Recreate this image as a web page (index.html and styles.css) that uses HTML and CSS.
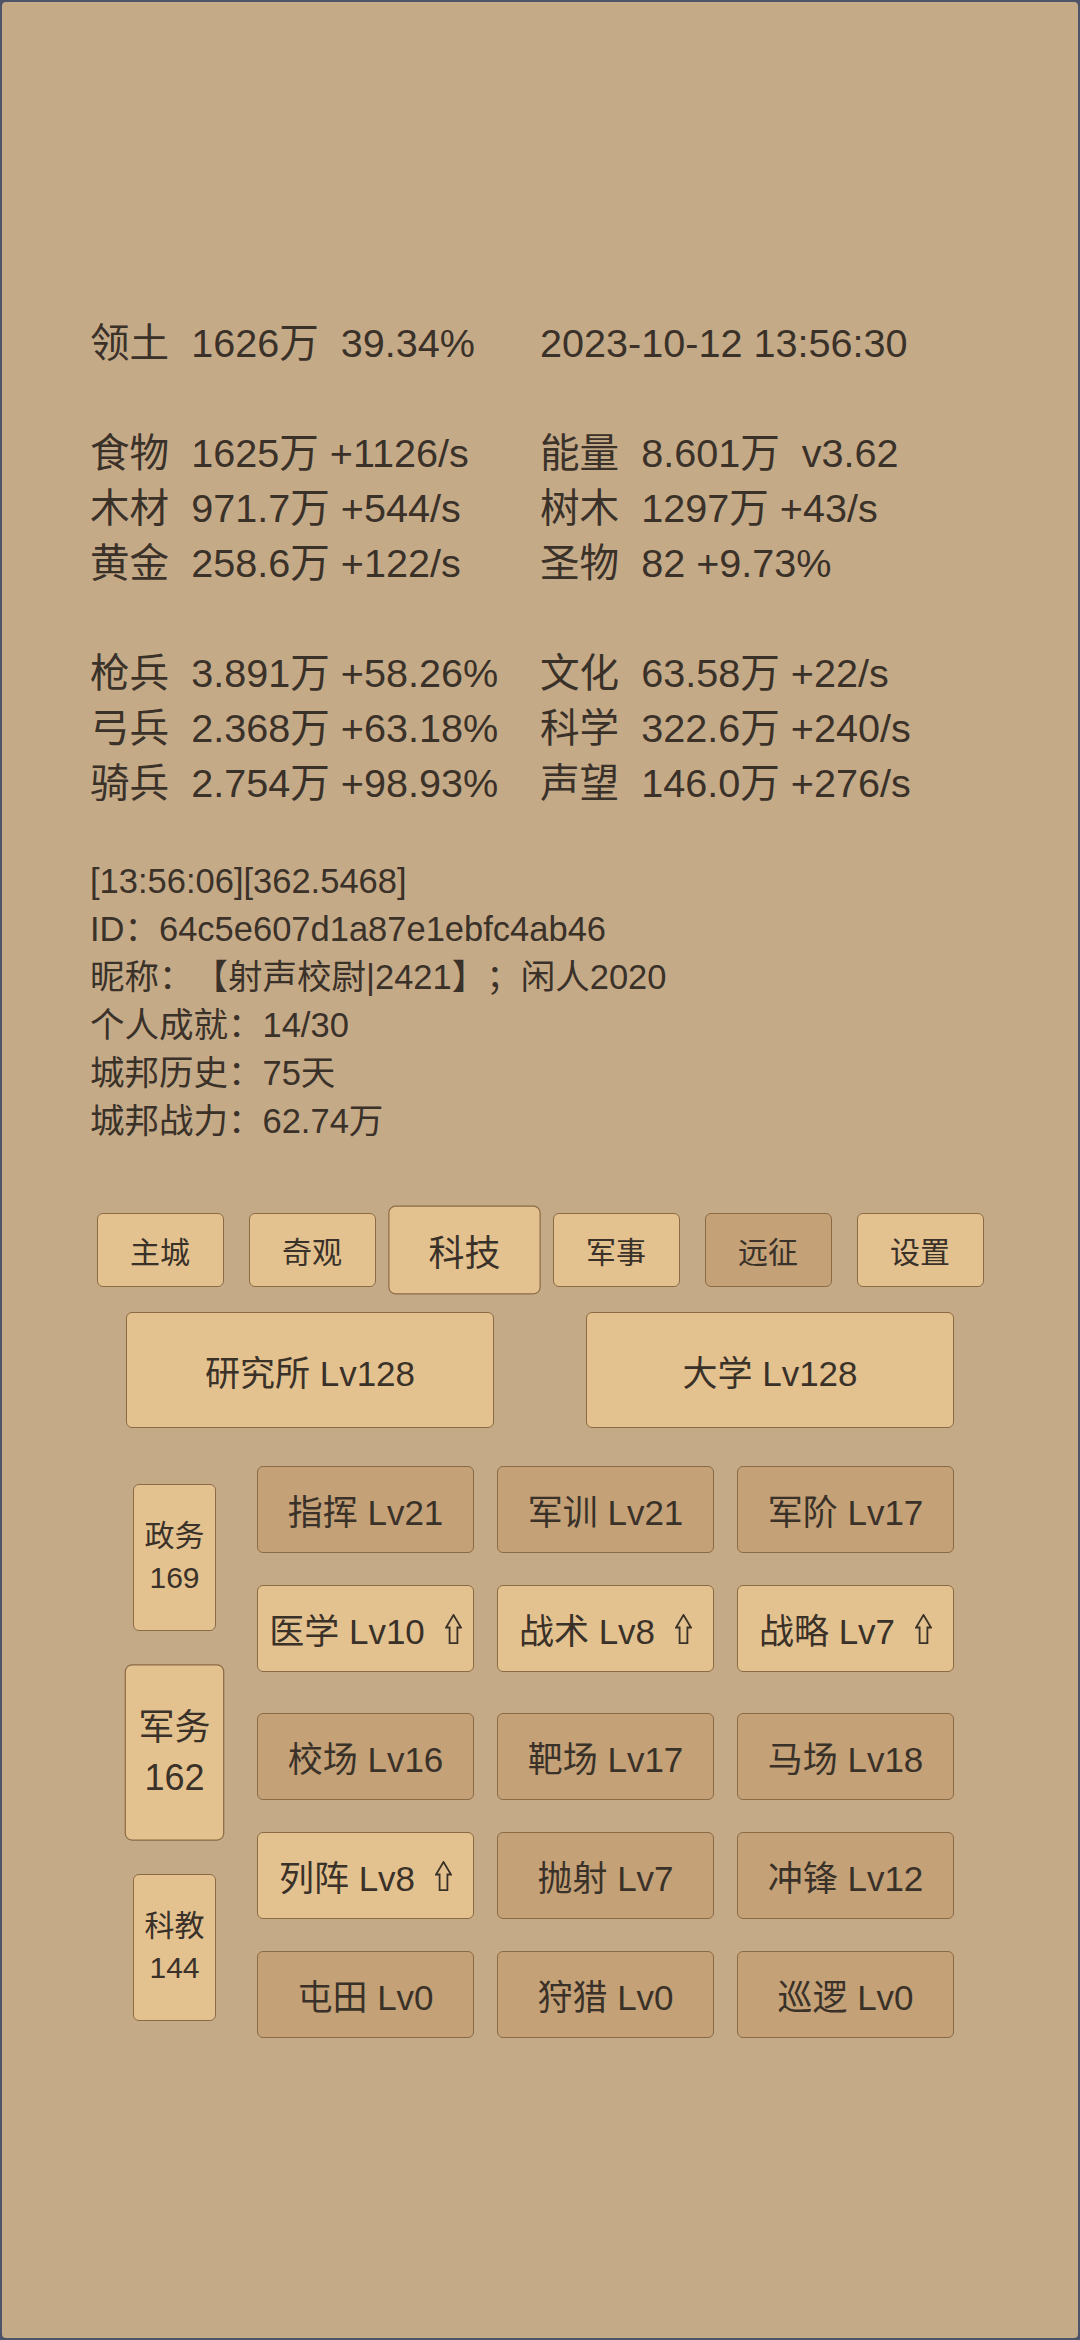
FILE: index.html
```html
<!DOCTYPE html>
<html lang="zh">
<head>
<meta charset="utf-8">
<title>城邦</title>
<link rel="stylesheet" href="styles.css">
</head>
<body>
<div class="screen">
  <div class="stats">
    <div class="group">
      <span class="cell">领土  1626万  39.34%</span>
      <span class="cell">2023-10-12 13:56:30</span>
    </div>
    <div class="group">
      <span class="cell">食物  1625万 +1126/s</span>
      <span class="cell">能量  8.601万  v3.62</span>
      <span class="cell">木材  971.7万 +544/s</span>
      <span class="cell">树木  1297万 +43/s</span>
      <span class="cell">黄金  258.6万 +122/s</span>
      <span class="cell">圣物  82 +9.73%</span>
    </div>
    <div class="group">
      <span class="cell">枪兵  3.891万 +58.26%</span>
      <span class="cell">文化  63.58万 +22/s</span>
      <span class="cell">弓兵  2.368万 +63.18%</span>
      <span class="cell">科学  322.6万 +240/s</span>
      <span class="cell">骑兵  2.754万 +98.93%</span>
      <span class="cell">声望  146.0万 +276/s</span>
    </div>
  </div>

  <div class="info">
    <div>[13:56:06][362.5468]</div>
    <div>ID：64c5e607d1a87e1ebfc4ab46</div>
    <div>昵称：【射声校尉|2421】；闲人2020</div>
    <div>个人成就：14/30</div>
    <div>城邦历史：75天</div>
    <div>城邦战力：62.74万</div>
  </div>

  <div class="nav">
    <div class="btn"><span class="label">主城</span></div>
    <div class="btn"><span class="label">奇观</span></div>
    <div class="btn active"><span class="label">科技</span></div>
    <div class="btn"><span class="label">军事</span></div>
    <div class="btn dark"><span class="label">远征</span></div>
    <div class="btn"><span class="label">设置</span></div>
  </div>

  <div class="big">
    <div class="btn"><span class="label">研究所 Lv128</span></div>
    <div class="btn"><span class="label">大学 Lv128</span></div>
  </div>

  <div class="tech">
    <div class="sections">
      <div class="btn"><span>政务</span><span>169</span></div>
      <div class="btn active"><span>军务</span><span>162</span></div>
      <div class="btn"><span>科教</span><span>144</span></div>
    </div>
    <div class="grids">
      <div class="grid">
        <div class="btn dark"><span class="label">指挥 Lv21</span></div>
        <div class="btn dark"><span class="label">军训 Lv21</span></div>
        <div class="btn dark"><span class="label">军阶 Lv17</span></div>
        <div class="btn"><span class="label">医学 Lv10<svg class="up" width="17" height="30" viewBox="0 0 17 30"><path d="M8.5 1 L16 13.5 L12.4 13.5 L12.4 29.1 L4.6 29.1 L4.6 13.5 L1 13.5 Z"/></svg></span></div>
        <div class="btn"><span class="label">战术 Lv8<svg class="up" width="17" height="30" viewBox="0 0 17 30"><path d="M8.5 1 L16 13.5 L12.4 13.5 L12.4 29.1 L4.6 29.1 L4.6 13.5 L1 13.5 Z"/></svg></span></div>
        <div class="btn"><span class="label">战略 Lv7<svg class="up" width="17" height="30" viewBox="0 0 17 30"><path d="M8.5 1 L16 13.5 L12.4 13.5 L12.4 29.1 L4.6 29.1 L4.6 13.5 L1 13.5 Z"/></svg></span></div>
      </div>
      <div class="grid">
        <div class="btn dark"><span class="label">校场 Lv16</span></div>
        <div class="btn dark"><span class="label">靶场 Lv17</span></div>
        <div class="btn dark"><span class="label">马场 Lv18</span></div>
        <div class="btn"><span class="label">列阵 Lv8<svg class="up" width="17" height="30" viewBox="0 0 17 30"><path d="M8.5 1 L16 13.5 L12.4 13.5 L12.4 29.1 L4.6 29.1 L4.6 13.5 L1 13.5 Z"/></svg></span></div>
        <div class="btn dark"><span class="label">抛射 Lv7</span></div>
        <div class="btn dark"><span class="label">冲锋 Lv12</span></div>
        <div class="btn dark"><span class="label">屯田 Lv0</span></div>
        <div class="btn dark"><span class="label">狩猎 Lv0</span></div>
        <div class="btn dark"><span class="label">巡逻 Lv0</span></div>
      </div>
    </div>
  </div>
</div>
</body>
</html>
```

FILE: styles.css
```css
* {
  box-sizing: border-box;
}

html,
body {
  margin: 0;
  padding: 0;
  background: #4d5368;
}

body {
  font-family: "Liberation Sans", "Noto Sans CJK SC", sans-serif;
  color: #3a3129;
  text-spacing-trim: space-all;
}

.screen {
  width: 1080px;
  height: 2340px;
  border: 2px solid #4d5368;
  border-radius: 6px;
  background: #c5aa88;
  overflow: hidden;
}

.stats {
  margin: 314px 0 0 88px;
  font-size: 39.6px;
  line-height: 55px;
}

.group {
  display: grid;
  grid-template-columns: 450px 450px;
}

.group + .group {
  margin-top: 55px;
}

.cell {
  white-space: pre;
}

.info {
  margin: 46px 0 0 88px;
  font-size: 34.5px;
  line-height: 48px;
}

.btn {
  display: flex;
  align-items: center;
  justify-content: center;
  background: #e4c28f;
  border: 1.5px solid #8b6b46;
  border-radius: 6px;
  color: #3a3129;
}

.btn.dark {
  background: #c4a177;
}

.btn.active {
  transform: scale(1.2);
}

.label {
  white-space: nowrap;
}

.nav {
  display: flex;
  justify-content: center;
  gap: 25px;
  margin-top: 68px;
}

.nav .btn {
  width: 127px;
  height: 74px;
  font-size: 30px;
}

.big {
  display: flex;
  justify-content: center;
  gap: 92px;
  margin-top: 25px;
}

.big .btn {
  width: 368px;
  height: 116px;
  font-size: 35px;
}

.tech {
  display: flex;
  align-items: center;
  gap: 41px;
  margin: 38px 0 0 131px;
}

.sections {
  display: flex;
  flex-direction: column;
  gap: 48px;
}

.sections .btn {
  flex-direction: column;
  width: 83px;
  height: 147px;
  font-size: 30px;
  line-height: 42px;
}

.grids {
  display: flex;
  flex-direction: column;
  gap: 41px;
}

.grid {
  display: grid;
  grid-template-columns: repeat(3, 217px);
  column-gap: 23px;
  row-gap: 32px;
}

.grid .btn {
  height: 87px;
  font-size: 35px;
}

.up {
  margin-left: 20px;
  vertical-align: baseline;
  fill: none;
  stroke: #3a3129;
  stroke-width: 1.8;
  stroke-linejoin: miter;
}
```
